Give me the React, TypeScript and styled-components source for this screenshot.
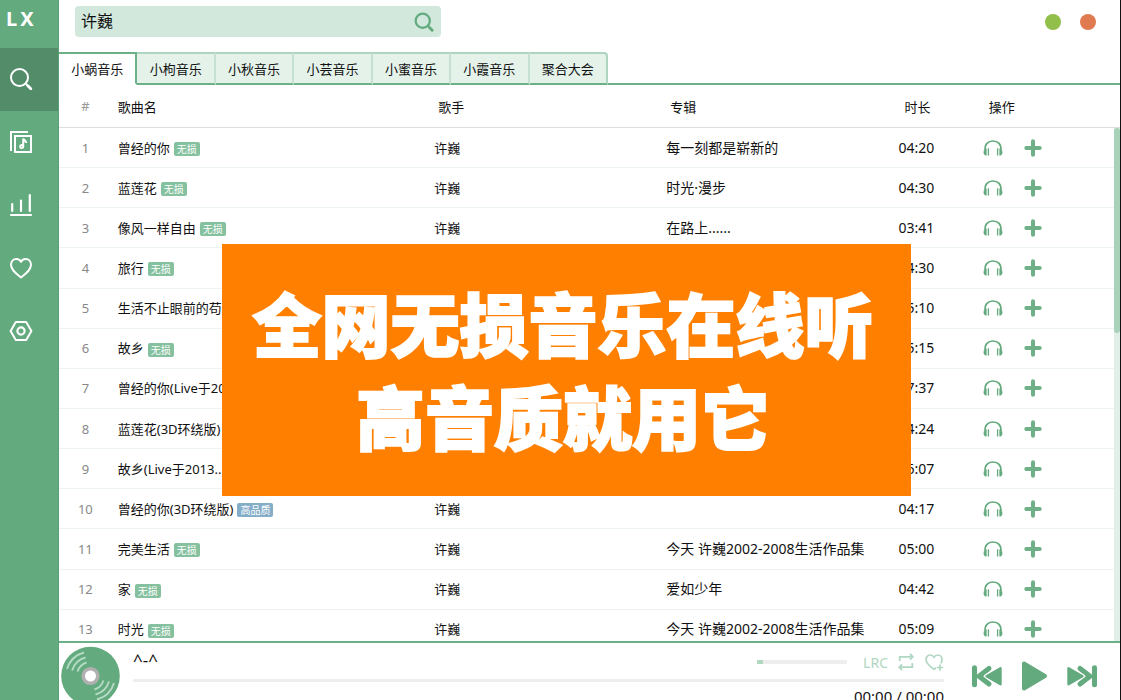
import React from 'react';
import styled, { createGlobalStyle } from 'styled-components';

const GREEN = '#63aa7e';
const SANS = '"Noto Sans", "Noto Sans CJK SC", sans-serif';

const GlobalStyle = createGlobalStyle`
  * { box-sizing: border-box; }
  body { margin: 0; background: #000; font-family: ${SANS}; font-size: 13px; color: #111; }
  button, input { font-family: inherit; font-size: inherit; color: inherit; }
  button { border: 0; padding: 0; background: none; display: flex; align-items: center; justify-content: center; }
  svg { display: block; }
`;

const Window = styled.div`
  position: relative;
  display: flex;
  height: 100vh;
  overflow: hidden;
  border-right: 1px solid #111;
  background: #fff;
`;

const Sidebar = styled.nav`
  flex: 0 0 59px;
  background: ${GREEN};
  border-right: 1px solid #5ba077;
`;

const Brand = styled.div`
  display: flex;
  gap: 3px;
  height: 48px;
  padding: 6px 0 0 6px;
  font-size: 20px;
  line-height: 26px;
  font-weight: 700;
  color: #fff;
`;

const NavButton = styled.button<{ $active?: boolean }>`
  && { justify-content: flex-start; }
  width: 100%;
  height: 63px;
  padding: 0 0 2px 9px;
  background: ${(p) => (p.$active ? '#528c69' : 'transparent')};
  color: #fff;
`;

const Main = styled.main`
  flex: 1;
  min-width: 0;
  display: flex;
  flex-direction: column;
`;

const Toolbar = styled.header`
  flex: 0 0 52px;
  display: flex;
  align-items: flex-start;
  justify-content: space-between;
  padding: 6px 24px 0 16px;
`;

const SearchBox = styled.form`
  display: flex;
  flex: 0 1 366px;
  height: 31px;
  border-radius: 4px;
  background: #d2e8dc;
`;

const SearchInput = styled.input`
  flex: 1;
  min-width: 0;
  border: 0;
  outline: 0;
  padding: 0 6px 3px;
  background: transparent;
  && { font-size: 16px; }
`;

const SearchButton = styled.button`
  width: 34px;
  color: ${GREEN};
`;

const WindowButtons = styled.div`
  display: flex;
  gap: 19px;
  padding-top: 8px;
`;

const Dot = styled.button<{ $color: string }>`
  width: 16px;
  height: 16px;
  border-radius: 50%;
  && { background: ${(p) => p.$color}; }
`;

const TabBar = styled.div`
  flex: 0 0 33px;
  display: flex;
  height: 33px;
  border-bottom: 2px solid #6bb087;
`;

const Tabs = styled.div`
  display: flex;
  width: 549px;
  height: 33px;
  margin-bottom: -2px;
`;

const Tab = styled.button<{ $active?: boolean }>`
  flex: 1;
  && {
    border-top: 2px solid ${(p) => (p.$active ? '#6bb087' : '#aed5bf')};
    border-right: 2px solid ${(p) => (p.$active ? '#6bb087' : '#c6e1d2')};
    border-bottom: 2px solid ${(p) => (p.$active ? '#fff' : '#6bb087')};
    background: ${(p) => (p.$active ? '#fff' : '#e4f2ea')};
  }
  &&:last-child {
    border-right-color: #aed5bf;
    border-top-right-radius: 4px;
  }
`;

const ListArea = styled.section`
  flex: 1;
  min-height: 0;
  display: flex;
  overflow: hidden;
`;

const SongTable = styled.table`
  flex: 1;
  width: 100%;
  height: 565px;
  table-layout: fixed;
  border-collapse: separate;
  border-spacing: 0;
`;

const HeadCell = styled.th<{ $width: string; $indent?: number; $index?: boolean }>`
  width: ${(p) => p.$width};
  height: 43px;
  padding: 0 0 0 ${(p) => p.$indent ?? 0}px;
  border-bottom: 1px solid #dcdfdd;
  font-weight: 400;
  text-align: ${(p) => (p.$index ? 'center' : 'left')};
  color: ${(p) => (p.$index ? '#999' : '#111')};
`;

const Cell = styled.td`
  padding: 0 0 0 6px;
  border-bottom: 1px solid #edf4f2;
  line-height: 20px;
  white-space: nowrap;
`;

const IndexCell = styled(Cell)`
  padding: 0;
  text-align: center;
  color: #888;
`;

const DetailCell = styled(Cell)`
  font-size: 14px;
`;

const NameLine = styled.div`
  display: flex;
  align-items: center;
  gap: 4px;
`;

const Badge = styled.span<{ $hq?: boolean }>`
  margin-top: 3px;
  padding: 0 3px;
  border-radius: 2px;
  background: ${(p) => (p.$hq ? '#84adc8' : '#86c19f')};
  color: #fff;
  font-size: 10px;
  line-height: 14px;
`;

const Actions = styled.div`
  display: flex;
  gap: 21px;
  color: ${GREEN};
`;

const ScrollColumn = styled.div`
  flex: 0 0 6px;
  display: flex;
  flex-direction: column;
`;

const ScrollHead = styled.div`
  flex: 0 0 43px;
  border-bottom: 1px solid #dcdfdd;
`;

const ScrollTrack = styled.div`
  flex: 1;
  background: #e0efe7;
`;

const ScrollThumb = styled.div`
  height: 40%;
  border-radius: 3px;
  background: #a8d2ba;
`;

const Player = styled.footer`
  flex: 0 0 59px;
  display: flex;
  overflow: hidden;
  border-top: 2px solid #6bb087;
`;

const Cover = styled.div`
  flex: 0 0 62px;
  padding: 3px 0 0 2px;
`;

const TrackInfo = styled.div`
  flex: 1;
  min-width: 0;
  padding: 4px 0 0 12px;
`;

const InfoRow = styled.div`
  display: flex;
  justify-content: space-between;
  height: 32px;
`;

const TrackTitle = styled.div`
  font-size: 17px;
  line-height: 26px;
`;

const PlayerTools = styled.div`
  display: flex;
  align-items: center;
  height: 30px;
  gap: 10px;
  color: #b0d7c1;
`;

const Lyrics = styled.span`
  font-size: 14px;
`;

const Volume = styled.div`
  width: 90px;
  height: 4px;
  margin-right: 6px;
  border-radius: 1px;
  background: #eee;
`;

const VolumeLevel = styled.div`
  width: 7%;
  height: 4px;
  background: #b0d7c1;
`;

const Progress = styled.div`
  height: 3px;
  border-radius: 1px;
  background: #eee;
`;

const Clock = styled.div`
  padding-top: 4px;
  text-align: right;
  font-size: 15px;
  line-height: 20px;
`;

const Transport = styled.div`
  display: flex;
  align-items: flex-start;
  gap: 18px;
  padding: 17px 22px 0 27px;
  color: ${GREEN};
`;

const Banner = styled.aside`
  position: absolute;
  left: 222px;
  top: 244px;
  width: 689px;
  height: 252px;
  padding: 32px 7px 0 0;
  background: #ff8000;
  color: #fff;
  font-family: "Noto Sans CJK SC", sans-serif;
  font-size: 69px;
  line-height: 93px;
  font-weight: 900;
  text-align: center;
  white-space: nowrap;
  -webkit-text-stroke: 2px #fff;
`;

const SearchIcon = ({ size, stroke }: { size: number; stroke: number }) => (
  <svg width={size} height={size} viewBox="0 0 24 24" fill="none" stroke="currentColor" strokeWidth={stroke}>
    <circle cx="10.5" cy="10.5" r="8.5" />
    <path d="M17 17l1.5 1.5" />
    <path d="M18.8 18.8l3 3" strokeWidth={stroke + 0.8} strokeLinecap="round" />
  </svg>
);

const LibraryIcon = () => (
  <svg width="24" height="24" viewBox="0 0 24 24" fill="none" stroke="currentColor" strokeWidth="2">
    <path d="M2 21V2h17" />
    <rect x="6" y="6" width="16" height="16" />
    <path d="M14.200 16.500V8.500c.5 2 3 2 3 4.500" />
    <circle cx="12.700" cy="16.500" r="1.500" />
  </svg>
);

const ChartIcon = () => (
  <svg width="24" height="24" viewBox="0 0 24 24" fill="none" stroke="currentColor" strokeWidth="2.2" strokeLinecap="round">
    <path d="M2 22h20M3.200 11v7M12 7.500v10.500M20.800 2v16" />
  </svg>
);

const HeartIcon = () => (
  <svg width="24" height="24" viewBox="0 0 24 24" fill="none" stroke="currentColor" strokeWidth="2" strokeLinejoin="round">
    <path d="M12 21.500C7 17.500 2 14 2 8.800C2 5.500 4.300 3 7.300 3C9.300 3 11 4 12 5.700C13 4 14.700 3 16.700 3C19.700 3 22 5.500 22 8.800C22 14 17 17.500 12 21.500Z" />
  </svg>
);

const SettingsIcon = () => (
  <svg width="24" height="24" viewBox="0 0 24 24" fill="none" stroke="currentColor" strokeWidth="2" strokeLinejoin="round">
    <path d="M6.800 3h10.400L22.400 12l-5.200 9H6.800L1.600 12z" />
    <circle cx="12" cy="12" r="3.600" strokeWidth="2.200" />
  </svg>
);

const HeadphonesIcon = () => (
  <svg width="20" height="18" viewBox="0 0 20 18" fill="none" stroke="currentColor">
    <path d="M2.200 11C1.500 5.500 5 2 10 2s8.500 3.500 7.800 9" strokeWidth="1.700" />
    <path d="M3.300 9.700v6.600C1.500 16.300.9 15 .9 13.200s.8-3.200 2.400-3.500zM16.700 9.700v6.600c1.800 0 2.400-1.300 2.400-3.100s-.8-3.200-2.400-3.500z" fill="currentColor" strokeWidth=".6" />
    <path d="M5.400 9.200v7.400M14.600 9.200v7.400" strokeWidth="1.300" />
  </svg>
);

const PlusIcon = () => (
  <svg width="18" height="18" viewBox="0 0 18 18" fill="none" stroke="currentColor" strokeWidth="4" strokeLinecap="round" opacity=".92">
    <path d="M9 2.300v13.400M2.300 9h13.400" />
  </svg>
);

const DiscIcon = () => (
  <svg width="60" height="60" viewBox="0 0 60 60" fill="none">
    <circle cx="29.500" cy="30" r="29.300" fill={GREEN} />
    <g stroke="#b4dac4" strokeWidth="1.900">
      <path d="M6 23A24.500 24.500 0 0 1 23 6.500M11 24.500A19.500 19.500 0 0 1 24.500 11.500M16.500 25.500A14 14 0 0 1 25.500 16.500" />
      <path d="M53 37A24.500 24.500 0 0 1 36 53.500M48 35.500A19.500 19.500 0 0 1 34.500 48.500M42.500 34.500A14 14 0 0 1 33.500 43.500" />
    </g>
    <circle cx="29.500" cy="30" r="7.300" fill="#fff" stroke="#b0b0b0" strokeWidth="3.600" />
  </svg>
);

const RepeatIcon = () => (
  <svg width="16" height="18" viewBox="0 0 16 18" fill="none" stroke="currentColor" strokeWidth="1.800">
    <path d="M1.700 8V3.800H13.500M14.300 10v4.200H2.500" />
    <path d="M12 1l2.800 2.800L12 6.600M4 11.400l-2.800 2.800L4 17" />
  </svg>
);

const HeartPlusIcon = () => (
  <svg width="20" height="18" viewBox="0 0 20 18" fill="none" stroke="currentColor" strokeWidth="1.700" strokeLinecap="round">
    <path d="M11.500 15.200L10 16.400C6 13.500 2 10.600 2 6.500C2 4 3.800 2 6.100 2C7.800 2 9.200 2.800 10 4.200C10.800 2.800 12.200 2 13.900 2C16.200 2 18 4 18 6.500c0 1.200-.3 2.300-.9 3.300" />
    <path d="M16 12v5M13.500 14.500h5" />
  </svg>
);

const SkipShape = () => (
  <g strokeLinejoin="round" strokeLinecap="round">
    <path d="M3.500 7.800v16.900" stroke="currentColor" strokeWidth="5" />
    <path d="M18 8.500L8 16.200l10 7.800" fill="none" stroke="currentColor" strokeWidth="5" />
    <path d="M29.500 8.200v16L15.500 16.200z" fill="#fff" stroke="#fff" strokeWidth="4.400" />
    <path d="M29.500 8.200v16L15.500 16.200z" fill="currentColor" stroke="currentColor" strokeWidth="2.400" />
  </g>
);

const PreviousIcon = () => (
  <svg width="32" height="32" viewBox="0 0 32 32">
    <SkipShape />
  </svg>
);

const NextIcon = () => (
  <svg width="32" height="32" viewBox="0 0 32 32">
    <g transform="matrix(-1 0 0 1 32 0)"><SkipShape /></g>
  </svg>
);

const PlayIcon = () => (
  <svg width="27" height="32" viewBox="0 0 27 32" fill="currentColor" stroke="currentColor" strokeWidth="4" strokeLinejoin="round">
    <path d="M3 3.500v25l21-12.500z" />
  </svg>
);

const TABS = ['小蜗音乐', '小枸音乐', '小秋音乐', '小芸音乐', '小蜜音乐', '小霞音乐', '聚合大会'];

type Song = { name: string; artist?: string; album?: string; time: string; quality?: string };

const SONGS: Song[] = [
  { name: '曾经的你', artist: '许巍', album: '每一刻都是崭新的', time: '04:20', quality: '无损' },
  { name: '蓝莲花', artist: '许巍', album: '时光·漫步', time: '04:30', quality: '无损' },
  { name: '像风一样自由', artist: '许巍', album: '在路上......', time: '03:41', quality: '无损' },
  { name: '旅行', time: '04:30', quality: '无损' },
  { name: '生活不止眼前的苟且', time: '05:10' },
  { name: '故乡', time: '05:15', quality: '无损' },
  { name: '曾经的你(Live于2013...', time: '07:37' },
  { name: '蓝莲花(3D环绕版)', time: '04:24' },
  { name: '故乡(Live于2013...', time: '06:07' },
  { name: '曾经的你(3D环绕版)', artist: '许巍', time: '04:17', quality: '高品质' },
  { name: '完美生活', artist: '许巍', album: '今天 许巍2002-2008生活作品集', time: '05:00', quality: '无损' },
  { name: '家', artist: '许巍', album: '爱如少年', time: '04:42', quality: '无损' },
  { name: '时光', artist: '许巍', album: '今天 许巍2002-2008生活作品集', time: '05:09', quality: '无损' },
];

export default function App() {
  return (
    <Window>
      <GlobalStyle />
      <Sidebar>
        <Brand><span>L</span><span>X</span></Brand>
        <NavButton $active aria-label="搜索"><SearchIcon size={24} stroke={2} /></NavButton>
        <NavButton aria-label="歌单"><LibraryIcon /></NavButton>
        <NavButton aria-label="排行榜"><ChartIcon /></NavButton>
        <NavButton aria-label="收藏"><HeartIcon /></NavButton>
        <NavButton aria-label="设置"><SettingsIcon /></NavButton>
      </Sidebar>
      <Main>
        <Toolbar>
          <SearchBox onSubmit={(e) => e.preventDefault()}>
            <SearchInput aria-label="搜索歌曲" defaultValue="许巍" />
            <SearchButton aria-label="搜索"><SearchIcon size={20} stroke={2.7} /></SearchButton>
          </SearchBox>
          <WindowButtons>
            <Dot $color="#91bf49" aria-label="最小化" />
            <Dot $color="#e07b51" aria-label="关闭" />
          </WindowButtons>
        </Toolbar>
        <TabBar>
          <Tabs role="tablist">
            {TABS.map((t, i) => (
              <Tab key={t} role="tab" aria-selected={i === 0} $active={i === 0}>{t}</Tab>
            ))}
          </Tabs>
        </TabBar>
        <ListArea>
          <SongTable>
            <thead>
              <tr>
                <HeadCell $width="5%" $index>#</HeadCell>
                <HeadCell $width="30%" $indent={6}>歌曲名</HeadCell>
                <HeadCell $width="22%" $indent={10}>歌手</HeadCell>
                <HeadCell $width="22%" $indent={10}>专辑</HeadCell>
                <HeadCell $width="8%" $indent={12}>时长</HeadCell>
                <HeadCell $width="13%" $indent={12}>操作</HeadCell>
              </tr>
            </thead>
            <tbody>
              {SONGS.map((s, i) => (
                <tr key={s.name}>
                  <IndexCell>{i + 1}</IndexCell>
                  <Cell>
                    <NameLine>
                      {s.name}
                      {s.quality && <Badge $hq={s.quality === '高品质'}>{s.quality}</Badge>}
                    </NameLine>
                  </Cell>
                  <Cell>{s.artist}</Cell>
                  <DetailCell>{s.album}</DetailCell>
                  <DetailCell>{s.time}</DetailCell>
                  <Cell>
                    <Actions>
                      <button aria-label="播放"><HeadphonesIcon /></button>
                      <button aria-label="添加"><PlusIcon /></button>
                    </Actions>
                  </Cell>
                </tr>
              ))}
            </tbody>
          </SongTable>
          <ScrollColumn>
            <ScrollHead />
            <ScrollTrack><ScrollThumb /></ScrollTrack>
          </ScrollColumn>
        </ListArea>
        <Player>
          <Cover><DiscIcon /></Cover>
          <TrackInfo>
            <InfoRow>
              <TrackTitle>^-^</TrackTitle>
              <PlayerTools>
                <Volume><VolumeLevel /></Volume>
                <Lyrics>LRC</Lyrics>
                <button aria-label="循环"><RepeatIcon /></button>
                <button aria-label="收藏歌曲"><HeartPlusIcon /></button>
              </PlayerTools>
            </InfoRow>
            <Progress />
            <Clock>00:00 / 00:00</Clock>
          </TrackInfo>
          <Transport>
            <button aria-label="上一首"><PreviousIcon /></button>
            <button aria-label="播放"><PlayIcon /></button>
            <button aria-label="下一首"><NextIcon /></button>
          </Transport>
        </Player>
      </Main>
      <Banner>
        <div>全网无损音乐在线听</div>
        <div>高音质就用它</div>
      </Banner>
    </Window>
  );
}
